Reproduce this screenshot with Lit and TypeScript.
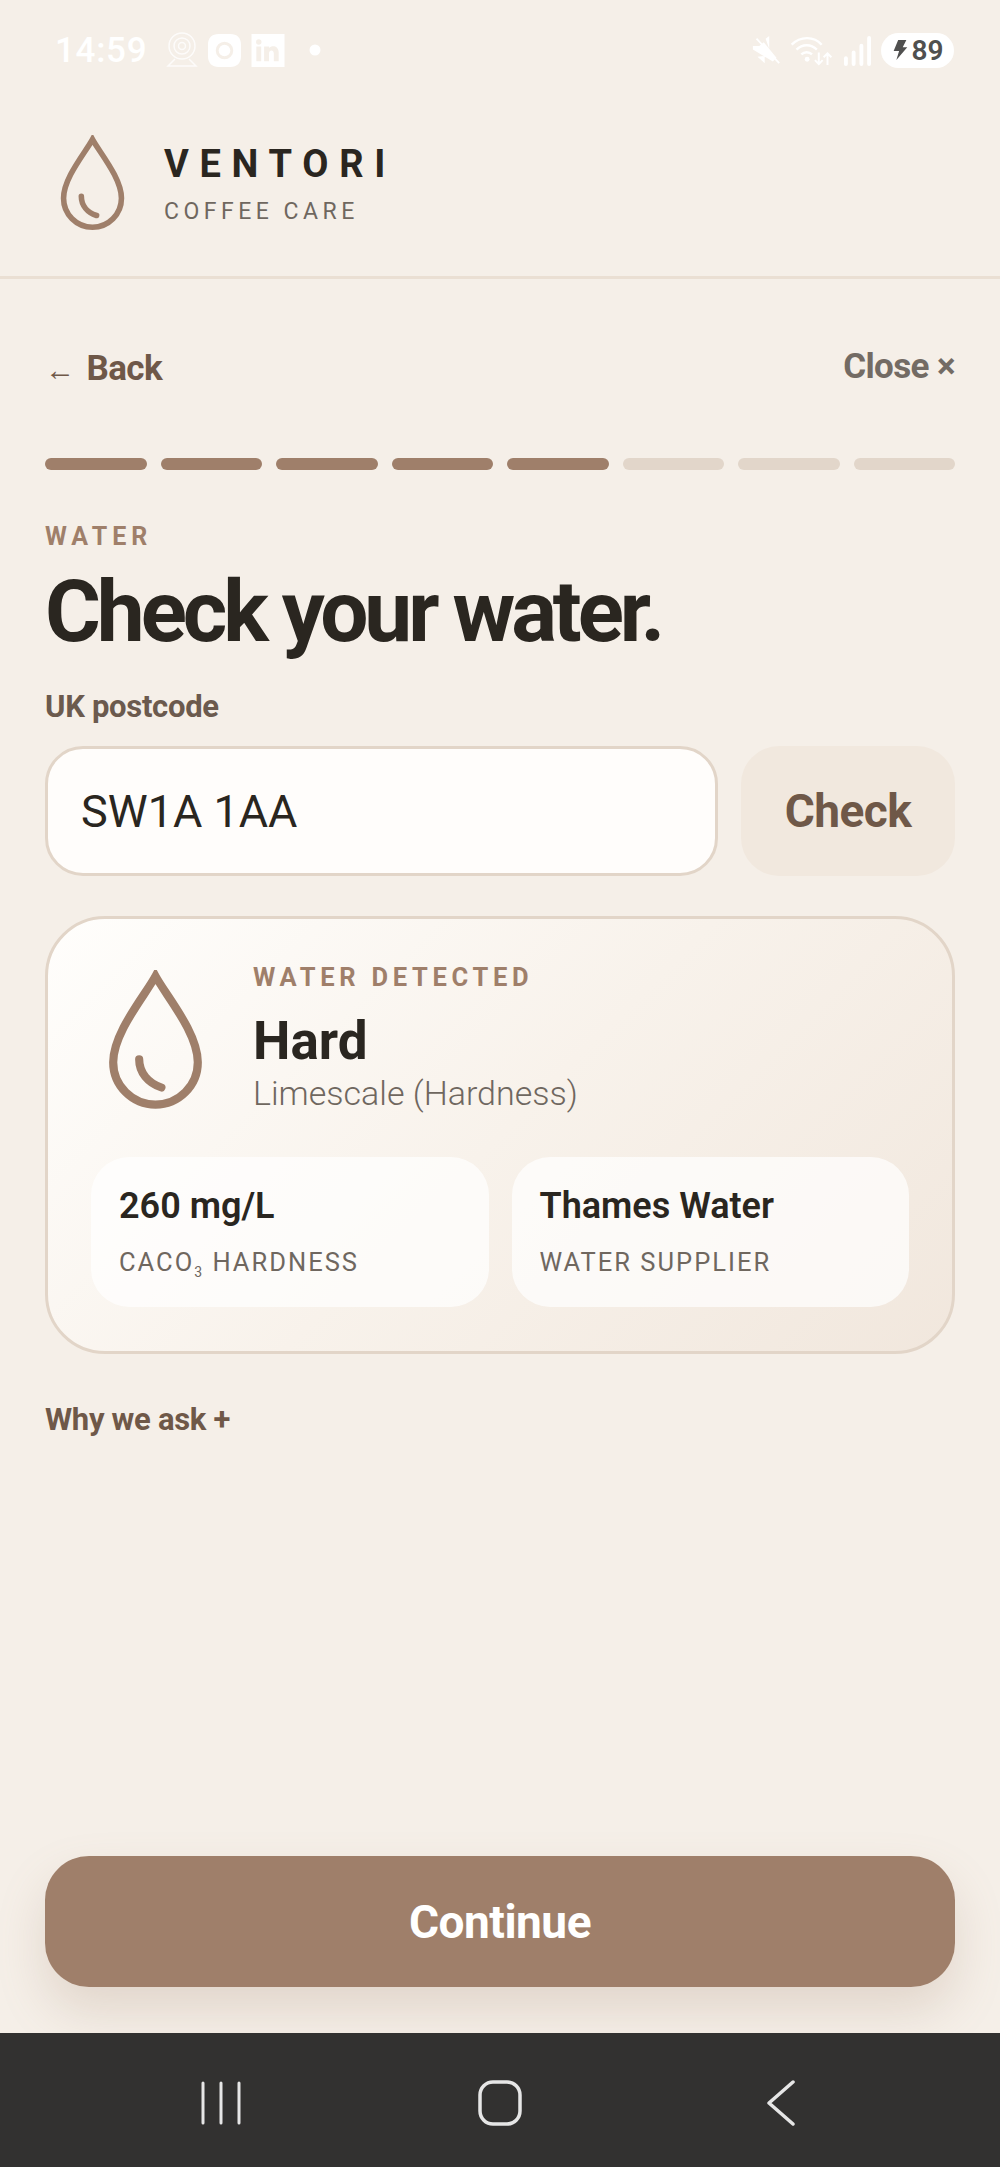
import { css, html, LitElement, svg } from "lit";
import { customElement } from "lit/decorators.js";

const drop = (w: number, h: number, stroke: number) => html`<svg
  class="drop"
  width=${w}
  height=${h}
  viewBox="0 0 64 94"
  fill="none"
  stroke="#9f7f6a"
>
  ${svg`<path stroke-width=${stroke} stroke-linejoin="miter" d="M32 4C25 17 3.500 42 3.500 62a28.500 28.500 0 0 0 57 0C60.500 42 39 17 32 4Z" />
  <path stroke-width=${stroke} stroke-linecap="round" d="M21 60c0 9 6 16 15 19" />`}
</svg>`;

@customElement("app-root")
export class AppRoot extends LitElement {
  static styles = css`
    :host {
      display: flex;
      flex-direction: column;
      height: 2167px;
      background: #f5efe8;
      color: #2a2620;
      font-family: Roboto, "Liberation Sans", sans-serif;
      overflow: hidden;
    }

    /* phone status bar */
    .status {
      display: flex;
      align-items: center;
      justify-content: space-between;
      height: 100px;
      padding: 0 46px 0 55px;
      box-sizing: border-box;
      color: #fff;
      flex: none;
    }
    .status-left,
    .status-right {
      display: flex;
      align-items: center;
    }
    .status-left {
      gap: 10px;
    }
    .status-right {
      gap: 9px;
    }
    .time {
      font-size: 35px;
      font-weight: 500;
      letter-spacing: 0.700px;
      margin-right: 9px;
      line-height: 1;
    }
    .status svg {
      display: block;
    }
    .dot {
      margin-left: 14px;
    }
    .battery {
      display: flex;
      align-items: center;
      justify-content: center;
      gap: 4px;
      width: 73px;
      height: 35px;
      border-radius: 18px;
      background: #fff;
      color: #50504f;
      font-size: 28px;
      font-weight: 600;
    }

    .brand {
      display: flex;
      align-items: center;
      gap: 39px;
      height: 179px;
      padding: 0 0 10px 60px;
      box-sizing: border-box;
      border-bottom: 3px solid #eadfd3;
      flex: none;
    }
    .brand-name {
      font-size: 38px;
      font-weight: 700;
      letter-spacing: 10.700px;
      line-height: 44px;
    }
    .brand-sub {
      font-size: 23px;
      letter-spacing: 4.500px;
      color: #6f675f;
      line-height: 26px;
      margin-top: 13px;
    }

    .main {
      display: flex;
      flex-direction: column;
      flex: 1;
      padding: 0 45px;
    }
    .nav-row {
      display: flex;
      justify-content: space-between;
      padding-top: 66px;
      height: 58px;
      flex: none;
    }
    .back {
      font-size: 35px;
      font-weight: 700;
      letter-spacing: -0.600px;
      color: #6f5848;
      line-height: 48px;
    }
    .back .arrow {
      font-family: "Liberation Sans", sans-serif;
      font-size: 30px;
      font-weight: 400;
      margin-right: 4px;
    }
    .close {
      font-size: 35px;
      font-weight: 700;
      letter-spacing: -0.600px;
      color: #736b64;
      line-height: 44px;
    }

    .progress {
      display: flex;
      gap: 14px;
      margin-top: 55px;
    }
    .seg {
      flex: 1;
      height: 12px;
      border-radius: 6px;
      background: #e2d6ca;
    }
    .seg.on {
      background: #9f7f6a;
    }

    .eyebrow {
      font-size: 25px;
      font-weight: 700;
      letter-spacing: 5px;
      color: #9f7f6a;
      line-height: 28px;
      margin-top: 53px;
    }
    h1 {
      font-size: 85.500px;
      font-weight: 700;
      letter-spacing: -4.100px;
      line-height: 92px;
      margin: 15px 0 0;
      color: #2a2620;
    }
    .label {
      font-size: 31px;
      font-weight: 700;
      letter-spacing: -0.300px;
      color: #6b5a4e;
      line-height: 36px;
      margin-top: 31px;
    }

    .postcode {
      display: flex;
      gap: 23px;
      margin-top: 21px;
    }
    .input {
      flex: 1;
      display: flex;
      align-items: center;
      height: 130px;
      box-sizing: border-box;
      padding: 0 33px;
      background: #fffdfb;
      border: 3px solid #e2d5c8;
      border-radius: 38px;
      font-size: 45px;
      color: #2a2620;
    }
    .check {
      display: flex;
      align-items: center;
      justify-content: center;
      width: 214px;
      height: 130px;
      border-radius: 38px;
      background: #f1e8de;
      color: #6f5848;
      font-size: 46px;
      font-weight: 700;
      letter-spacing: -0.500px;
    }

    .card {
      margin-top: 40px;
      height: 438px;
      box-sizing: border-box;
      border: 3px solid #e2d5c8;
      border-radius: 60px;
      background: linear-gradient(135deg, #fffefc 0%, #f8f2eb 50%, #f1e7dd 100%);
      padding: 0 43px;
    }
    .card-top {
      display: flex;
      height: 238px;
    }
    .card-drop {
      width: 162px;
      flex: none;
      padding: 51px 0 0 17px;
      box-sizing: border-box;
    }
    .detected {
      font-size: 25.500px;
      font-weight: 700;
      letter-spacing: 4.700px;
      color: #9f7f6a;
      line-height: 28px;
      margin-top: 44px;
    }
    .hard {
      font-size: 53px;
      font-weight: 700;
      line-height: 60px;
      margin-top: 20px;
    }
    .lime {
      font-size: 34px;
      font-weight: 300;
      color: #6f675f;
      line-height: 40px;
      margin-top: 2px;
    }
    .stats {
      display: flex;
      gap: 23px;
    }
    .stat {
      flex: 1;
      height: 150px;
      box-sizing: border-box;
      padding: 28px 28px 0;
      background: rgba(255, 255, 255, 0.7);
      border-radius: 38px;
    }
    .stat-value {
      font-size: 36px;
      font-weight: 600;
      line-height: 42px;
    }
    .stat-label {
      font-size: 25.500px;
      font-weight: 400;
      letter-spacing: 2px;
      color: #6f675f;
      line-height: 30px;
      margin-top: 20px;
    }
    .stat-label sub {
      font-size: 14px;
      line-height: 0;
    }

    .why {
      font-size: 31px;
      font-weight: 700;
      letter-spacing: -0.300px;
      color: #6f5848;
      line-height: 36px;
      margin-top: 48px;
    }
    .spacer {
      flex: 1;
    }
    .continue {
      display: flex;
      align-items: center;
      justify-content: center;
      height: 131px;
      border-radius: 44px;
      background: #9f7f6a;
      color: #fff;
      font-size: 46px;
      font-weight: 700;
      letter-spacing: -0.500px;
      box-shadow: 0 24px 48px rgba(159, 127, 106, 0.22);
      margin-bottom: 46px;
    }

    /* phone nav bar */
    .navbar {
      display: flex;
      align-items: center;
      justify-content: space-between;
      height: 134px;
      background: #323130;
      padding: 5px 200px 0;
      box-sizing: border-box;
      flex: none;
    }
    .navbar svg {
      display: block;
    }
  `;

  render() {
    return html`
      <div class="status">
        <div class="status-left">
          <span class="time">14:59</span>
          <svg width="32" height="36" viewBox="0 0 32 36" fill="none" stroke="#fff" stroke-width="1.500" opacity="0.8">
            <circle cx="16" cy="14" r="13" />
            <circle cx="16" cy="14" r="8" />
            <circle cx="16" cy="14" r="3.500" />
            <path d="M9 27 2 34h28l-7-7" />
          </svg>
          <svg width="33" height="33" viewBox="0 0 34 34">
            <path fill="#fff" fill-rule="evenodd" d="M11 0h12c7 0 11 4 11 11v12c0 7-4 11-11 11H11C4 34 0 30 0 23V11C0 4 4 0 11 0Zm6 8a9 9 0 1 0 0 18 9 9 0 0 0 0-18Z" />
            <circle cx="17" cy="17" r="6" fill="#fff" />
          </svg>
          <svg width="34" height="33" viewBox="0 0 34 34">
            <path fill="#fff" fill-rule="evenodd" d="M0 0h34v34H0ZM5 13v15h5V13Zm2.500-7.500a2.800 2.800 0 1 0 0 5.600 2.800 2.800 0 0 0 0-5.600ZM13 13v15h5v-8c0-4 5-4 5 0v8h5v-9c0-7-7-8-10-4.500V13Z" />
          </svg>
          <svg class="dot" width="12" height="12" viewBox="0 0 12 12">
            <circle cx="6" cy="6" r="5.500" fill="#fff" />
          </svg>
        </div>
        <div class="status-right">
          <svg width="29" height="29" viewBox="0 0 32 32" fill="#fff">
            <path d="M1 11h7l5-4 14 17-4 4L1 15Zm13 11v8l-8-7ZM15 3l4-3v14Z" />
            <path d="M5 3l25 27" stroke="#fff" stroke-width="2" />
          </svg>
          <svg width="44" height="31" viewBox="0 0 44 32" fill="none" stroke="#fff" stroke-width="2.500">
            <path d="M1 10c9-9 23-9 31 0M6 15c6-6 15-6 21 0M11 20c3-3 8-3 11 0" />
            <circle cx="17" cy="25" r="2.500" fill="#fff" stroke="none" />
            <path d="M29 18v12m-4-4 4 4 4-4M38 31V19m-4 4 4-4 4 4" stroke-width="2" />
          </svg>
          <svg width="29" height="31" viewBox="0 0 30 32" fill="#fff">
            <rect x="1" y="22" width="4" height="10" rx="2" />
            <rect x="9" y="16" width="4" height="16" rx="2" />
            <rect x="17" y="9" width="4" height="23" rx="2" />
            <rect x="25" y="1" width="4" height="31" rx="2" />
          </svg>
          <div class="battery">
            <svg width="16" height="20" viewBox="0 0 16 22" fill="#50504f">
              <path d="M6 0h9l-4 8h5L4 22l3-10H1Z" />
            </svg>
            <span>89</span>
          </div>
        </div>
      </div>

      <div class="brand">
        ${drop(65, 96, 5.500)}
        <div>
          <div class="brand-name">VENTORI</div>
          <div class="brand-sub">COFFEE CARE</div>
        </div>
      </div>

      <div class="main">
        <div class="nav-row">
          <div class="back"><span class="arrow">←</span> Back</div>
          <div class="close">Close ×</div>
        </div>

        <div class="progress">
          ${[1, 2, 3, 4, 5, 6, 7, 8].map((n) => html`<div class="seg ${n <= 5 ? "on" : ""}"></div>`)}
        </div>

        <div class="eyebrow">WATER</div>
        <h1>Check your water.</h1>
        <div class="label">UK postcode</div>

        <div class="postcode">
          <div class="input">SW1A 1AA</div>
          <div class="check">Check</div>
        </div>

        <div class="card">
          <div class="card-top">
            <div class="card-drop">${drop(95, 140, 5.500)}</div>
            <div>
              <div class="detected">WATER DETECTED</div>
              <div class="hard">Hard</div>
              <div class="lime">Limescale (Hardness)</div>
            </div>
          </div>
          <div class="stats">
            <div class="stat">
              <div class="stat-value">260 mg/L</div>
              <div class="stat-label">CACO<sub>3</sub> HARDNESS</div>
            </div>
            <div class="stat">
              <div class="stat-value">Thames Water</div>
              <div class="stat-label">WATER SUPPLIER</div>
            </div>
          </div>
        </div>

        <div class="why">Why we ask +</div>
        <div class="spacer"></div>
        <div class="continue">Continue</div>
      </div>

      <div class="navbar">
        <svg width="42" height="44" viewBox="0 0 42 44" fill="none" stroke="#e6e6e6" stroke-width="3" stroke-linecap="round">
          <path d="M3 2v40M21 2v40M39 2v40" />
        </svg>
        <svg width="44" height="46" viewBox="0 0 44 46" fill="none" stroke="#e6e6e6" stroke-width="3.500">
          <rect x="2" y="2" width="40" height="42" rx="13" />
        </svg>
        <svg width="42" height="46" viewBox="0 0 42 46" fill="none" stroke="#e6e6e6" stroke-width="3.500" stroke-linecap="round" stroke-linejoin="round">
          <path d="M35 2 11 23l24 21" />
        </svg>
      </div>
    `;
  }
}
